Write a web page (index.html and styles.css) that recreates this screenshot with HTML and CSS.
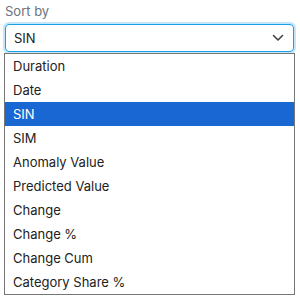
FILE: index.html
```html
<!DOCTYPE html>
<html lang="en">
<head>
    <meta charset="UTF-8">
    <meta name="viewport" content="width=device-width, initial-scale=1.0">
    <title>Sort by</title>
    <link rel="stylesheet" href="styles.css">
</head>
<body>
    <div class="field">
        <label class="field-label">Sort by</label>
        <div class="select">
            <span class="select-value">SIN</span>
            <svg class="chevron" width="12" height="8" viewBox="0 0 12 8">
                <path d="M1.5 1.5 L6 6 L10.5 1.5" fill="none" stroke="#444" stroke-width="1.6" stroke-linecap="round" stroke-linejoin="round"/>
            </svg>
        </div>
        <ul class="options">
            <li>Duration</li>
            <li>Date</li>
            <li class="selected">SIN</li>
            <li>SIM</li>
            <li>Anomaly Value</li>
            <li>Predicted Value</li>
            <li>Change</li>
            <li>Change %</li>
            <li>Change Cum</li>
            <li>Category Share %</li>
        </ul>
    </div>
</body>
</html>
```

FILE: styles.css
```css
body {
    font-family: 'Inter', 'Liberation Sans', sans-serif;
    margin: 0;
    padding: 0;
    background: #fff;
    color: #222;
}

.field {
    padding: 3px 5px 0 4px;
}

.field-label {
    display: block;
    font-size: 13px;
    line-height: 16px;
    color: #6b7280;
    padding-left: 1px;
    margin-bottom: 5px;
}

.select {
    display: flex;
    align-items: center;
    justify-content: space-between;
    height: 26px;
    margin: 0 1px 0 1px;
    padding: 0 9px 0 8px;
    border: 1px solid #1a9ee8;
    border-radius: 4px;
    box-shadow: 0 0 0 2px #c4e6fb;
    font-size: 13px;
}

.chevron {
    display: block;
}

.options {
    list-style: none;
    margin: 1px 0 0 0;
    padding: 0;
    border: 1px solid #767676;
    font-size: 13px;
}

.options li {
    height: 24px;
    line-height: 24px;
    padding-left: 8px;
}

.options li.selected {
    background: #1967d2;
    color: #fff;
}
```
